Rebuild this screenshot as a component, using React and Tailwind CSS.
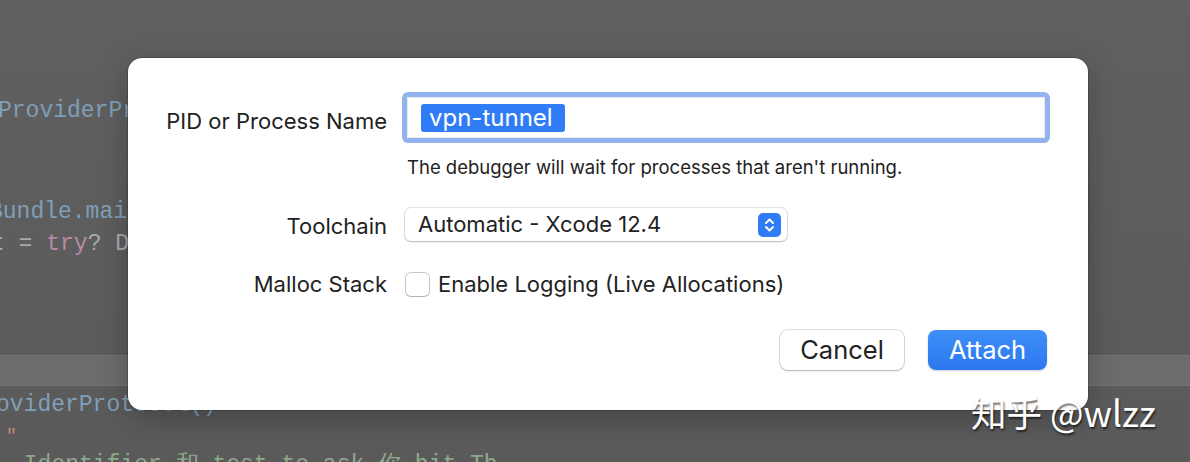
const mono = { fontFamily: '"Liberation Mono", "DejaVu Sans Mono", monospace' };

const Stepper = () => (
  <svg width="23" height="24" viewBox="0 0 23 24" className="shrink-0">
    <rect width="23" height="24" rx="5" fill="#2f7cf6" />
    <path d="M8 10 L11.5 6.5 L15 10" fill="none" stroke="#fff" strokeWidth="2" strokeLinecap="round" strokeLinejoin="round" />
    <path d="M8 14 L11.5 17.5 L15 14" fill="none" stroke="#fff" strokeWidth="2" strokeLinecap="round" strokeLinejoin="round" />
  </svg>
);

const Editor = () => (
  <div
    className="h-[462px] w-[1190px] overflow-hidden bg-gradient-to-b from-[#606060] to-[#5a5a5a] text-[23px] leading-none"
    style={mono}
  >
    <div className="mt-[100px] -ml-[2px] text-[#7f9fb9]">ProviderProtocol</div>
    <div className="mt-[78px] -ml-[11px] text-[#7f9fb9]">Bundle.main</div>
    <div className="mt-[9px] -ml-[9px] text-[#a6aab0]">
      t = <span className="text-[#b98aa6]">try</span>? Data
    </div>
    <div className="mt-[99px] h-[31px] border-y border-[#747474] bg-[#6c6c6c]" />
    <div className="mt-[8px] -ml-[4px] text-[#7f9fb9]">oviderProtocol()</div>
    <div className="mt-[10px] ml-[6px] text-[18px] text-[#c98a80]">"</div>
    <div className="mt-[9px] ml-[10px] text-[#8ea88a]">_Identifier 和 test to ask 你 hit Th</div>
  </div>
);

const Dialog = () => (
  <div
    className="absolute left-[128px] top-[58px] flex h-[352px] w-[960px] flex-col rounded-[14px] bg-white text-[#222] shadow-[0_0_0_1px_rgba(0,0,0,0.15),0_8px_30px_rgba(0,0,0,0.25)]"
    style={{ fontFamily: 'Inter, "Helvetica Neue", Arial, sans-serif' }}
  >
    <div className="mt-[34px] flex items-center">
      <div className="w-[259px] pt-[8px] text-right text-[22px]">PID or Process Name</div>
      <div className="ml-[15px] flex h-[51px] w-[648px] items-center rounded-[6px] bg-[#93b3f0] p-[5px]">
        <div className="flex h-full w-full items-center bg-white px-[14px] shadow-[inset_0_0_0_1px_rgba(0,0,0,0.08)]">
          <span className="rounded-[3px] bg-[#2f7cf6] pl-[8px] pr-[12px] text-[24px] leading-[28px] text-white">
            vpn-tunnel
          </span>
        </div>
      </div>
    </div>
    <div className="ml-[279px] mt-[12px] text-[18.5px] leading-[24px]">
      The debugger will wait for processes that aren't running.
    </div>
    <div className="mt-[27px] flex items-center">
      <div className="w-[259px] pt-[4px] text-right text-[22px]">Toolchain</div>
      <div className="ml-[18px] flex h-[33px] w-[382px] items-center justify-between rounded-[6px] bg-white pl-[13px] pr-[6px] shadow-[0_0_0_1px_rgba(0,0,0,0.1),0_1px_2px_rgba(0,0,0,0.2)]">
        <span className="text-[22px]">Automatic - Xcode 12.4</span>
        <Stepper />
      </div>
    </div>
    <div className="mt-[25px] flex items-center">
      <div className="w-[259px] text-right text-[22px]">Malloc Stack</div>
      <div className="ml-[19px] flex items-center gap-[9px]">
        <span className="h-[23px] w-[23px] rounded-[5px] bg-white shadow-[0_0_0_1px_rgba(0,0,0,0.22),0_1px_1px_rgba(0,0,0,0.1)]" />
        <span className="text-[22px]">Enable Logging (Live Allocations)</span>
      </div>
    </div>
    <div className="mr-[41px] mt-[29px] flex justify-end gap-[24px]">
      <button className="h-[40px] w-[124px] rounded-[8px] bg-white text-[25.5px] shadow-[0_0_0_1px_rgba(0,0,0,0.12),0_1px_2px_rgba(0,0,0,0.2)]">
        Cancel
      </button>
      <button className="h-[40px] w-[119px] rounded-[8px] bg-gradient-to-b from-[#3e8ff7] to-[#2c78f0] text-[25.5px] text-white shadow-[0_1px_2px_rgba(0,0,0,0.2)]">
        Attach
      </button>
    </div>
  </div>
);

export default function App() {
  return (
    <div className="relative h-[462px] w-[1190px] overflow-hidden">
      <Editor />
      <Dialog />
      <div
        className="absolute left-[971px] top-[388px] text-[35.5px] leading-[48px] text-white [text-shadow:1px_2px_2px_rgba(0,0,0,0.6)]"
        style={{ fontFamily: '"Noto Sans CJK SC", "Noto Sans", sans-serif' }}
      >
        知乎 @wlzz
      </div>
    </div>
  );
}
